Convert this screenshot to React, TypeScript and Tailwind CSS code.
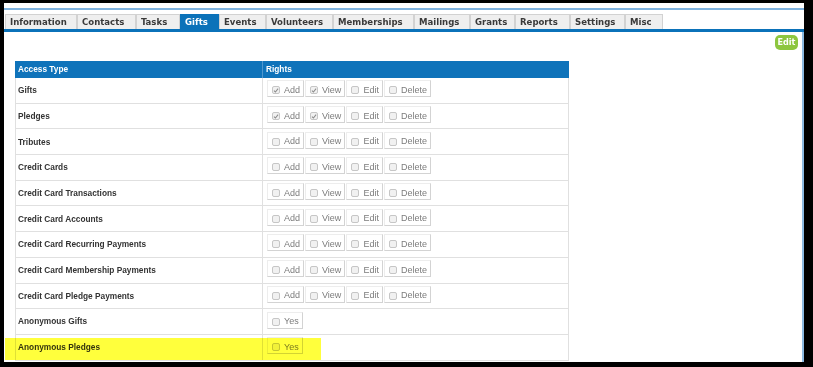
import React from "react";

type Right = { label: string; checked: boolean };

const four = (a: boolean, v: boolean): Right[] => [
  { label: "Add", checked: a },
  { label: "View", checked: v },
  { label: "Edit", checked: false },
  { label: "Delete", checked: false },
];

const rows: { name: string; rights: Right[] }[] = [
  { name: "Gifts", rights: four(true, true) },
  { name: "Pledges", rights: four(true, true) },
  { name: "Tributes", rights: four(false, false) },
  { name: "Credit Cards", rights: four(false, false) },
  { name: "Credit Card Transactions", rights: four(false, false) },
  { name: "Credit Card Accounts", rights: four(false, false) },
  { name: "Credit Card Recurring Payments", rights: four(false, false) },
  { name: "Credit Card Membership Payments", rights: four(false, false) },
  { name: "Credit Card Pledge Payments", rights: four(false, false) },
  { name: "Anonymous Gifts", rights: [{ label: "Yes", checked: false }] },
  { name: "Anonymous Pledges", rights: [{ label: "Yes", checked: false }] },
];

const tabs: [string, number][] = [
  ["Information", 72],
  ["Contacts", 59],
  ["Tasks", 44],
  ["Gifts", 39],
  ["Events", 47],
  ["Volunteers", 67],
  ["Memberships", 81],
  ["Mailings", 56],
  ["Grants", 45],
  ["Reports", 55],
  ["Settings", 55],
  ["Misc", 38],
];

const tabFont = { fontFamily: '"DejaVu Sans Condensed", "DejaVu Sans", sans-serif' };
const arial = { fontFamily: '"Liberation Sans", Arial, sans-serif' };

function Check({ checked }: { checked: boolean }) {
  return (
    <span className="w-[8px] h-[8px] rounded-[2px] border border-[#c6c6c6] bg-[#f1f1f1] flex items-center justify-center">
      {checked && (
        <svg width="7" height="7" viewBox="0 0 8 8">
          <path d="M1.2 4.2 L3.2 6 L6.8 1.6" fill="none" stroke="#8c8c8c" strokeWidth="1.4" />
        </svg>
      )}
    </span>
  );
}

export default function App() {
  return (
    <div className="relative w-[813px] h-[367px] bg-black pt-[3px] pl-[4px] pr-[9px] pb-[5px]">
      <div className="h-full bg-white pt-[5px] overflow-hidden">
        <div className="h-full border-t-2 border-[#7fb3df] flex flex-col">
          {/* Tabs */}
          <div className="flex pt-[4px] pl-[1px]" style={tabFont}>
            {tabs.map(([t, w]) => {
              const active = t === "Gifts";
              return (
                <div
                  key={t}
                  style={{ width: w }}
                  className={
                    "h-[15px] flex items-center pl-[4px] text-[9.5px] font-bold border-t border-l border-r " +
                    (active
                      ? "bg-[#0b72b9] text-white border-[#0b72b9]"
                      : "bg-[#efefef] text-[#3a3a3a] border-[#d2d2d2]")
                  }
                >
                  {t}
                </div>
              );
            })}
          </div>
          <div className="h-[3px] bg-[#0b72b9]" />

          {/* Content */}
          <div className="flex-1 border-r-2 border-[#8dbbe2]">
            <div className="flex justify-end pr-[4px] pt-[3px]">
              <div
                className="w-[23px] h-[15px] rounded-[5px] bg-[#8dc63f] text-white text-[9px] font-bold flex items-center justify-center"
                style={tabFont}
              >
                Edit
              </div>
            </div>

            <div className="ml-[11px] mt-[11px] w-[554px]" style={arial}>
              <div className="flex h-[17px] bg-[#0f73ba] text-white text-[8.3px] font-bold">
                <div className="w-[248px] pl-[3px] flex items-center border-r border-[#4f97cf]">Access Type</div>
                <div className="flex-1 pl-[3px] flex items-center">Rights</div>
              </div>
              {rows.map((r) => (
                <div key={r.name} className="flex h-[25.7px] border-b border-l border-r border-[#e0e0e0]">
                  <div className="w-[247px] pl-[2px] flex items-center text-[8.3px] font-bold text-[#333] border-r border-[#e0e0e0]">
                    {r.name}
                  </div>
                  <div className="flex-1 pl-[4px] flex items-center gap-[1px] -mt-[3px]">
                    {r.rights.map((x) => (
                      <span
                        key={x.label}
                        className="flex items-center h-[17px] pl-[4px] pr-[3px] pt-[3px] gap-[4px] leading-none border border-[#ededed] border-r-[#d3d3d3] border-b-[#d3d3d3] text-[9px] text-[#7c7c7c]"
                      >
                        <Check checked={x.checked} />
                        {x.label}
                      </span>
                    ))}
                  </div>
                </div>
              ))}
            </div>
          </div>
        </div>
      </div>

      {/* highlighter annotation */}
      <div className="absolute left-[5px] top-[338px] w-[316px] h-[22px] bg-[#ffff3c] mix-blend-multiply" />
    </div>
  );
}
